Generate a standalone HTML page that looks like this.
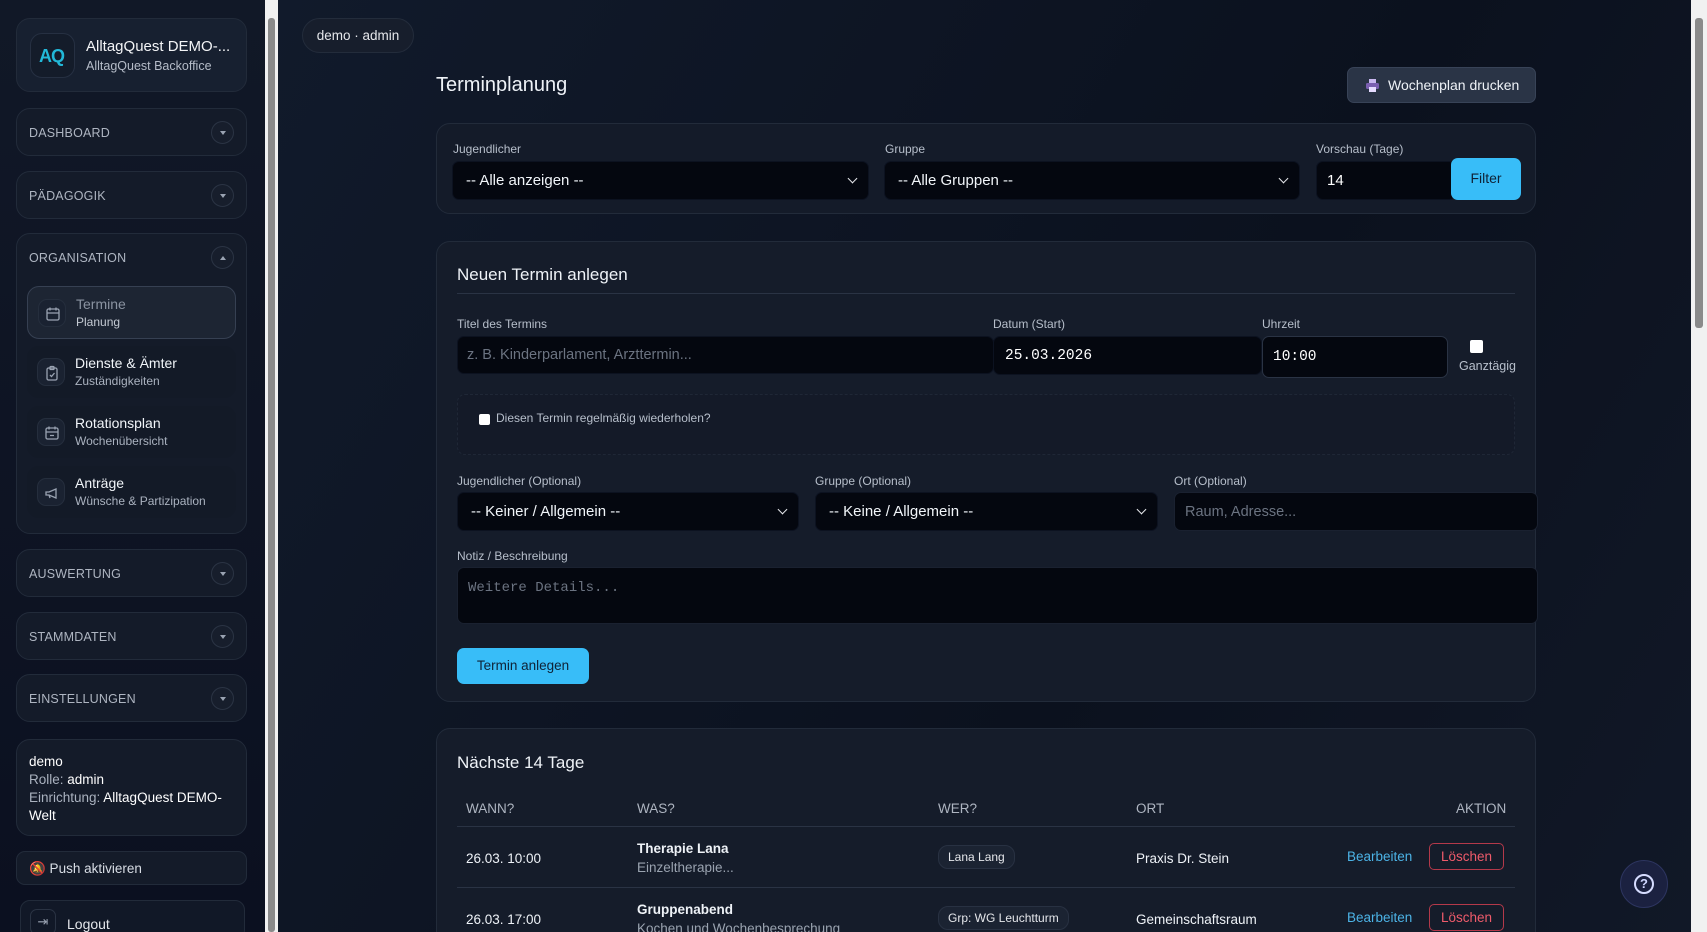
<!DOCTYPE html>
<html><head><meta charset="utf-8">
<style>
*{box-sizing:border-box;margin:0;padding:0}
html{width:1707px;height:932px;overflow:hidden}
body{width:1707px;height:932px;overflow:hidden;background:#0e1422;font-family:"Liberation Sans","DejaVu Sans",sans-serif;color:#e5e7eb;position:relative}
.a{position:absolute}
#side{left:0;top:0;width:265px;height:932px;background:linear-gradient(180deg,#111827,#0b1020)}
.sb{left:265px;top:0;width:13px;height:932px;background:#f1f1f1}
.sb i{position:absolute;left:3px;top:18px;width:7px;height:914px;background:#8a8a8a;border-radius:3px}
.card{background:#141b29;border:1px solid #222b3a;border-radius:14px}
.sec{left:16px;width:231px;height:48px}
.sec span{position:absolute;left:12px;top:17px;font-size:12.5px;color:#aeb5c1;letter-spacing:.2px}
.sec b{position:absolute;right:12px;top:12px;width:23px;height:23px;border:1px solid #2b3444;border-radius:50%;background:#171e2c}
.sec b:after{content:"";position:absolute;left:8px;top:9px;border-left:3px solid transparent;border-right:3px solid transparent;border-top:4px solid #9aa3b2}
.sec b.up:after{border-top:0;border-bottom:4px solid #9aa3b2}
.item{left:27px;width:209px;height:52px;border-radius:12px;background:#131a27}
.item .ic{position:absolute;left:10px;top:12px;width:28px;height:28px;border-radius:9px;background:#1a2231;border:1px solid #252e3d}
.item .ic svg{position:absolute;left:6px;top:6px}
.item .t{position:absolute;left:48px;top:9px;font-size:14px;color:#f1f5f9}
.item .s{position:absolute;left:48px;top:28px;font-size:12px;color:#aab2bf}
.lbl{font-size:12px;color:#b7bfcb}
.inp{background:#04070f;border-radius:7px;border:1px solid #0c1220}
.sel{font-size:15px;color:#f1f5f9}
.sel:after{content:"";position:absolute;right:12px;top:13px;width:6px;height:6px;border-right:1.5px solid #e5e7eb;border-bottom:1.5px solid #e5e7eb;transform:rotate(45deg)}
.th{font-size:13.5px;color:#aeb5c1;top:801px}
.td{font-size:13.5px;color:#eef2f7}
.pill{background:#1b2332;border:1px solid #283142;border-radius:10px;font-size:12px;padding:4px 9px;color:#e5e7eb}
.del{border:1px solid #b4394a;border-radius:5px;color:#ef5b6b;font-size:13.5px;padding:5px 11px}
.edit{color:#4cb3e6;font-size:13.5px}
</style></head><body>
<div class="a" id="side">
 <div class="a card" style="left:16px;top:18px;width:231px;height:74px;background:#172030">
  <div class="a" style="left:13px;top:14px;width:45px;height:45px;border-radius:12px;background:#141c2a;border:1px solid #263042"></div>
  <div class="a" style="left:22px;top:27px;font-size:18px;font-weight:bold;color:#22b8d8;letter-spacing:-1px">AQ</div>
  <div class="a" style="left:69px;top:19px;font-size:15px;color:#f3f4f6">AlltagQuest DEMO-...</div>
  <div class="a" style="left:69px;top:40px;font-size:12.5px;color:#b5bcc8">AlltagQuest Backoffice</div>
 </div>
 <div class="a card sec" style="top:108px"><span>DASHBOARD</span><b></b></div>
 <div class="a card sec" style="top:171px"><span>PÄDAGOGIK</span><b></b></div>
 <div class="a card sec" style="top:233px;height:301px"><span style="top:17px">ORGANISATION</span><b class="up"></b></div>
 <div class="a item" style="top:286px;background:#1d2533;border:1px solid #364052;height:53px"><div class="ic"><svg width="16" height="16" viewBox="0 0 16 16" fill="none" stroke="#9aa3b2" stroke-width="1.3"><rect x="2" y="3" width="12" height="11" rx="1.5"/><path d="M2 7h12M5 1.5v3M11 1.5v3"/></svg></div><div class="t" style="color:#8a93a1">Termine</div><div class="s" style="color:#c4cad3">Planung</div></div>
 <div class="a item" style="top:346px"><div class="ic"><svg width="16" height="16" viewBox="0 0 16 16" fill="none" stroke="#9aa3b2" stroke-width="1.3"><rect x="3" y="3" width="10" height="12" rx="1.5"/><rect x="6" y="1.5" width="4" height="3" rx=".8"/><path d="M6 10l1.5 1.5L10.5 8"/></svg></div><div class="t">Dienste &amp; Ämter</div><div class="s">Zuständigkeiten</div></div>
 <div class="a item" style="top:406px"><div class="ic"><svg width="16" height="16" viewBox="0 0 16 16" fill="none" stroke="#9aa3b2" stroke-width="1.3"><rect x="2" y="3" width="12" height="11" rx="1.5"/><path d="M2 7h12M5 1.5v3M11 1.5v3M6 10.5h4"/></svg></div><div class="t">Rotationsplan</div><div class="s">Wochenübersicht</div></div>
 <div class="a item" style="top:466px"><div class="ic"><svg width="16" height="16" viewBox="0 0 16 16" fill="none" stroke="#9aa3b2" stroke-width="1.3"><path d="M2 7v3h3l7 3V4L5 7z M5 10l1 3"/></svg></div><div class="t">Anträge</div><div class="s">Wünsche &amp; Partizipation</div></div>
 <div class="a card sec" style="top:549px"><span>AUSWERTUNG</span><b></b></div>
 <div class="a card sec" style="top:612px"><span>STAMMDATEN</span><b></b></div>
 <div class="a card sec" style="top:674px"><span>EINSTELLUNGEN</span><b></b></div>
 <div class="a card" style="left:16px;top:739px;width:231px;height:97px;font-size:13.5px;line-height:18px;padding:13px 12px;color:#aab2bf">
  <div style="color:#fff">demo</div><div>Rolle: <span style="color:#fff">admin</span></div><div>Einrichtung: <span style="color:#fff">AlltagQuest DEMO-Welt</span></div>
 </div>
 <div class="a card" style="left:16px;top:851px;width:231px;height:34px;border-radius:9px;font-size:13.5px;padding:9px 12px;color:#d8dde5">🔕 Push aktivieren</div>
 <div class="a card" style="left:20px;top:900px;width:225px;height:40px;border-radius:10px;background:#111827">
  <div class="a" style="left:9px;top:8px;width:26px;height:26px;border:1px solid #2a3343;border-radius:7px;color:#9aa3b2;font-size:13px;text-align:center;line-height:24px">⇥</div>
  <div class="a" style="left:46px;top:15px;font-size:14px;color:#e5e7eb">Logout</div>
 </div>
</div>
<div class="a sb"><i></i></div>
<div class="a" style="left:278px;top:0;width:1413px;height:932px;background:linear-gradient(120deg,#111a2b,#0b111e 60%,#111827)"></div>
<div class="a sb" style="left:1691px;width:16px"><i style="left:4px;top:18px;height:310px;width:8px"></i></div>

<div class="a" style="left:302px;top:18px;width:112px;height:35px;border-radius:18px;background:#171e2c;border:1px solid #232c3b;font-size:13.5px;text-align:center;line-height:33px;color:#e5e7eb">demo · admin</div>
<div class="a" style="left:436px;top:74px;font-size:20px;color:#eef2f7">Terminplanung</div>
<div class="a" style="left:1347px;top:67px;width:189px;height:36px;border-radius:7px;background:#2a3446;border:1px solid #384357;font-size:14px;line-height:34px;padding-left:40px;color:#eef2f7">Wochenplan drucken
 <svg class="a" style="left:17px;top:10px" width="15" height="15" viewBox="0 0 15 15"><rect x="4" y="1" width="7" height="4" fill="#c9b8f0"/><rect x="1" y="5" width="13" height="6" rx="1.5" fill="#7a5fb0"/><rect x="4" y="9" width="7" height="5" fill="#e6dcff"/></svg></div>

<div class="a card" style="left:436px;top:123px;width:1100px;height:91px;background:#141b29">
 <div class="a lbl" style="left:16px;top:18px">Jugendlicher</div>
 <div class="a lbl" style="left:448px;top:18px">Gruppe</div>
 <div class="a lbl" style="left:879px;top:18px">Vorschau (Tage)</div>
 <div class="a inp sel" style="left:15px;top:37px;width:417px;height:39px;padding:10px 13px">-- Alle anzeigen --</div>
 <div class="a inp sel" style="left:447px;top:37px;width:416px;height:39px;padding:10px 13px">-- Alle Gruppen --</div>
 <div class="a inp" style="left:879px;top:37px;width:140px;height:39px;padding:10px 10px;font-size:15px;color:#fff">14</div>
 <div class="a" style="left:1014px;top:34px;width:70px;height:42px;background:#38bdf8;border-radius:7px;color:#0f2236;font-size:14px;text-align:center;line-height:40px">Filter</div>
</div>

<div class="a card" style="left:436px;top:241px;width:1100px;height:461px;background:#151c2a">
 <div class="a" style="left:20px;top:23px;font-size:17px;color:#eef2f7">Neuen Termin anlegen</div>
 <div class="a" style="left:20px;top:51px;width:1058px;height:1px;background:#2a3344"></div>
 <div class="a lbl" style="left:20px;top:75px">Titel des Termins</div>
 <div class="a lbl" style="left:556px;top:75px">Datum (Start)</div>
 <div class="a lbl" style="left:825px;top:75px">Uhrzeit</div>
 <div class="a inp" style="left:20px;top:94px;width:537px;height:38px;padding:10px 9px;font-size:14.5px;color:#6b7381">z. B. Kinderparlament, Arzttermin...</div>
 <div class="a inp" style="left:556px;top:94px;width:269px;height:39px;padding:11px 11px;font-size:14.5px;color:#fff;font-family:'Liberation Mono',monospace">25.03.2026</div>
 <div class="a inp" style="left:825px;top:94px;width:186px;height:42px;padding:12px 10px;font-size:14.5px;color:#fff;font-family:'Liberation Mono',monospace;border:1px solid #2a3344">10:00</div>
 <div class="a" style="left:1033px;top:98px;width:13px;height:13px;background:#fff;border-radius:2px"></div>
 <div class="a lbl" style="left:1022px;top:117px;font-size:12.5px">Ganztägig</div>
 <div class="a" style="left:20px;top:152px;width:1058px;height:61px;border-radius:8px;background:#141a28;border:1px dashed #1f2736"></div>
 <div class="a" style="left:42px;top:172px;width:11px;height:11px;background:#fff;border-radius:2px"></div>
 <div class="a lbl" style="left:59px;top:169px">Diesen Termin regelmäßig wiederholen?</div>
 <div class="a lbl" style="left:20px;top:232px">Jugendlicher (Optional)</div>
 <div class="a lbl" style="left:378px;top:232px">Gruppe (Optional)</div>
 <div class="a lbl" style="left:737px;top:232px">Ort (Optional)</div>
 <div class="a inp sel" style="left:20px;top:250px;width:342px;height:39px;padding:10px 13px">-- Keiner / Allgemein --</div>
 <div class="a inp sel" style="left:378px;top:250px;width:343px;height:39px;padding:10px 13px">-- Keine / Allgemein --</div>
 <div class="a inp" style="left:737px;top:250px;width:364px;height:39px;padding:11px 10px;font-size:14.5px;color:#6b7381;border:1px solid #1a2130">Raum, Adresse...</div>
 <div class="a lbl" style="left:20px;top:307px">Notiz / Beschreibung</div>
 <div class="a inp" style="left:20px;top:325px;width:1081px;height:57px;padding:12px 10px;font-size:14px;color:#6b7381;font-family:'Liberation Mono',monospace;border:1px solid #1a2130">Weitere Details...</div>
 <div class="a" style="left:20px;top:406px;width:132px;height:36px;background:#38bdf8;border-radius:7px;color:#0f2236;font-size:13.5px;text-align:center;line-height:35px">Termin anlegen</div>
</div>

<div class="a card" style="left:436px;top:728px;width:1100px;height:220px;background:#151c2a">
 <div class="a" style="left:20px;top:24px;font-size:17px;color:#eef2f7">Nächste 14 Tage</div>
</div>
<div class="a th" style="left:466px">WANN?</div>
<div class="a th" style="left:637px">WAS?</div>
<div class="a th" style="left:938px">WER?</div>
<div class="a th" style="left:1136px">ORT</div>
<div class="a th" style="left:1456px">AKTION</div>
<div class="a" style="left:457px;top:826px;width:1058px;height:1px;background:#2a3344"></div>
<div class="a td" style="left:466px;top:851px">26.03. 10:00</div>
<div class="a td" style="left:637px;top:841px;font-weight:bold">Therapie Lana</div>
<div class="a td" style="left:637px;top:860px;color:#9aa3b0">Einzeltherapie...</div>
<div class="a pill" style="left:938px;top:845px">Lana Lang</div>
<div class="a td" style="left:1136px;top:851px">Praxis Dr. Stein</div>
<div class="a edit" style="left:1347px;top:849px">Bearbeiten</div>
<div class="a del" style="left:1429px;top:843px">Löschen</div>
<div class="a" style="left:457px;top:887px;width:1058px;height:1px;background:#2a3344"></div>
<div class="a td" style="left:466px;top:912px">26.03. 17:00</div>
<div class="a td" style="left:637px;top:902px;font-weight:bold">Gruppenabend</div>
<div class="a td" style="left:637px;top:921px;color:#9aa3b0">Kochen und Wochenbesprechung</div>
<div class="a pill" style="left:938px;top:906px">Grp: WG Leuchtturm</div>
<div class="a td" style="left:1136px;top:912px">Gemeinschaftsraum</div>
<div class="a edit" style="left:1347px;top:910px">Bearbeiten</div>
<div class="a del" style="left:1429px;top:904px">Löschen</div>

<div class="a" style="left:1620px;top:860px;width:48px;height:48px;border-radius:50%;background:#1b2140;border:1px solid #2d3560;color:#cfd6ff;font-size:19px;text-align:center;line-height:46px">
 <span style="display:inline-block;width:20px;height:20px;border:2px solid #d6dcff;border-radius:50%;line-height:16px;font-size:13px;font-weight:bold;vertical-align:middle">?</span></div>
</body></html>
